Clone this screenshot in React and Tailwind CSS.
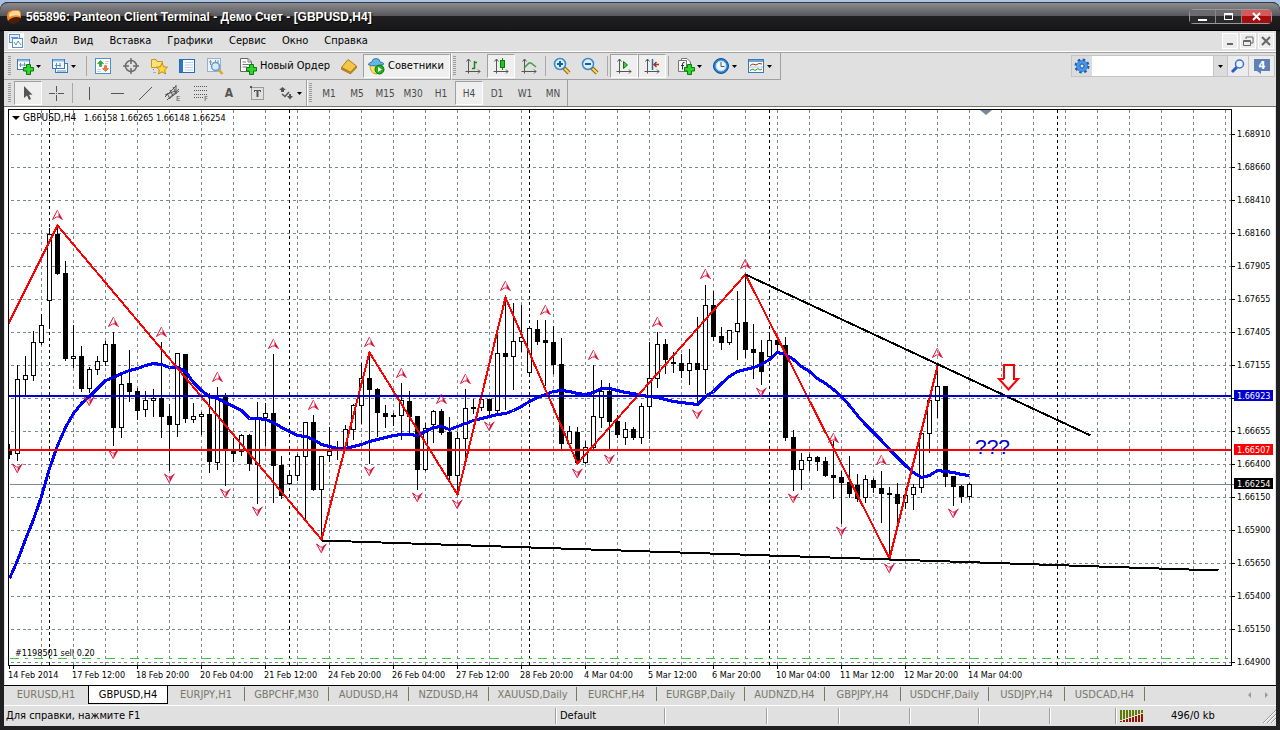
import { useState } from "react";

const menuItems = ["Файл", "Вид", "Вставка", "Графики", "Сервис", "Окно", "Справка"];
const timeframes = ["M1", "M5", "M15", "M30", "H1", "H4", "D1", "W1", "MN"];

const chartTabs = [
  { name: "EURUSD,H1", width: "w-[83px]" },
  { name: "GBPUSD,H4", width: "w-[80px]" },
  { name: "EURJPY,H1", width: "w-[77px]" },
  { name: "GBPCHF,M30", width: "w-[84px]" },
  { name: "AUDUSD,H4", width: "w-[80px]" },
  { name: "NZDUSD,H4", width: "w-[80px]" },
  { name: "XAUUSD,Daily", width: "w-[88px]" },
  { name: "EURCHF,H4", width: "w-[80px]" },
  { name: "EURGBP,Daily", width: "w-[88px]" },
  { name: "AUDNZD,H4", width: "w-[80px]" },
  { name: "GBPJPY,H4", width: "w-[76px]" },
  { name: "USDCHF,Daily", width: "w-[88px]" },
  { name: "USDJPY,H4", width: "w-[76px]" },
  { name: "USDCAD,H4", width: "w-[80px]" },
];

const priceLabels = [
  "1.68910", "1.68660", "1.68410", "1.68160", "1.67905", "1.67655", "1.67405", "1.67155", null,
  "1.66655", "1.66400", "1.66150", "1.65900", "1.65650", "1.65400", "1.65150", "1.64900",
];

const timeLabels = [
  "14 Feb 2014", "17 Feb 12:00", "18 Feb 20:00", "20 Feb 04:00", "21 Feb 12:00", "24 Feb 20:00",
  "26 Feb 04:00", "27 Feb 12:00", "28 Feb 20:00", "4 Mar 04:00", "5 Mar 12:00", "6 Mar 20:00",
  "10 Mar 04:00", "11 Mar 12:00", "12 Mar 20:00", "14 Mar 04:00",
];

// [high, body top, body bottom, low, 1 = rising], one bar every 8 units
const candles = [
  [443, 450, 454, 458, 0], [364, 379, 453, 460, 1], [355, 375, 379, 395, 1], [330, 342, 375, 380, 1],
  [313, 325, 342, 344, 1], [227, 234, 300, 327, 1], [225, 234, 273, 274, 0], [260, 273, 358, 360, 0],
  [324, 356, 358, 367, 1], [345, 356, 388, 391, 0], [366, 369, 388, 392, 1], [355, 361, 369, 374, 1],
  [340, 344, 361, 365, 1], [331, 344, 427, 445, 0], [372, 384, 427, 437, 1], [349, 383, 391, 401, 0],
  [387, 391, 410, 419, 0], [390, 400, 409, 416, 1], [388, 398, 400, 416, 1], [341, 398, 416, 437, 0],
  [403, 416, 424, 470, 0], [352, 353, 424, 436, 1], [353, 354, 418, 422, 0], [402, 416, 419, 422, 1],
  [411, 414, 416, 434, 1], [392, 414, 461, 472, 0], [386, 399, 462, 469, 1], [392, 397, 448, 485, 0],
  [437, 450, 453, 461, 0], [433, 435, 451, 455, 1], [433, 435, 463, 470, 0], [401, 419, 464, 503, 1],
  [402, 413, 417, 445, 1], [353, 413, 465, 502, 0], [455, 465, 495, 498, 0], [470, 475, 483, 484, 1],
  [453, 456, 475, 480, 1], [422, 422, 456, 520, 1], [414, 422, 489, 490, 0], [455, 456, 489, 540, 1],
  [426, 451, 455, 461, 1], [440, 449, 450, 459, 0], [424, 429, 449, 450, 1], [403, 405, 429, 439, 1],
  [362, 378, 405, 423, 1], [352, 378, 389, 463, 0], [387, 389, 412, 436, 0], [404, 413, 416, 427, 0],
  [412, 415, 416, 425, 0], [382, 400, 415, 439, 1], [390, 401, 416, 432, 0], [415, 416, 469, 489, 0],
  [422, 428, 469, 470, 1], [409, 411, 424, 442, 1], [408, 411, 432, 434, 0], [416, 432, 475, 482, 0],
  [431, 438, 475, 493, 1], [388, 408, 438, 456, 1], [398, 407, 408, 413, 0], [398, 399, 407, 410, 1],
  [399, 399, 410, 417, 0], [330, 353, 410, 412, 1], [297, 353, 356, 409, 0], [302, 341, 356, 389, 1],
  [304, 337, 341, 351, 1], [325, 328, 372, 376, 1], [319, 329, 341, 344, 0], [319, 340, 342, 385, 0],
  [325, 342, 364, 373, 0], [337, 364, 443, 448, 0], [425, 431, 443, 447, 1], [426, 432, 462, 464, 0],
  [440, 447, 462, 463, 1], [364, 416, 447, 449, 1], [379, 391, 417, 427, 1], [382, 391, 421, 449, 0],
  [414, 421, 434, 437, 0], [421, 429, 437, 444, 1], [426, 429, 437, 439, 0], [402, 406, 437, 443, 1],
  [341, 378, 406, 438, 1], [331, 344, 378, 387, 1], [338, 344, 359, 373, 0], [351, 362, 363, 372, 0],
  [353, 363, 370, 377, 0], [348, 363, 370, 384, 1], [316, 363, 369, 405, 0], [284, 305, 369, 393, 1],
  [290, 305, 336, 340, 0], [326, 336, 342, 349, 0], [330, 330, 342, 344, 1], [290, 323, 331, 359, 1],
  [274, 322, 349, 357, 0], [323, 349, 352, 378, 0], [339, 352, 371, 384, 0], [331, 340, 356, 357, 1],
  [337, 340, 344, 350, 0], [336, 345, 437, 440, 0], [429, 437, 469, 490, 0], [452, 460, 469, 489, 1],
  [453, 457, 460, 470, 1], [455, 457, 461, 470, 0], [456, 461, 475, 476, 0], [440, 475, 477, 498, 0],
  [470, 477, 482, 523, 0], [455, 482, 493, 497, 0], [473, 485, 498, 501, 0], [474, 479, 497, 502, 1],
  [477, 480, 487, 492, 0], [470, 488, 493, 522, 0], [486, 493, 494, 558, 0], [482, 494, 503, 523, 0],
  [487, 495, 502, 508, 1], [483, 487, 494, 509, 1], [433, 433, 487, 492, 1], [400, 400, 433, 452, 1],
  [364, 386, 400, 417, 1], [385, 386, 476, 486, 0], [475, 476, 486, 505, 0], [484, 486, 496, 502, 0],
  [482, 484, 496, 499, 1],
];

// moving average, one value per bar
const average = [
  578, 560, 539, 519, 496, 468, 445, 427, 413, 403, 396, 388, 380, 377, 373, 370, 368, 365, 363, 364,
  367, 367, 371, 382, 390, 396, 398, 402, 406, 410, 418, 418, 419, 422, 427, 431, 435, 436, 439, 444,
  446, 448, 448, 446, 444, 441, 439, 437, 435, 434, 434, 435, 431, 427, 426, 429, 426, 423, 420, 418,
  416, 414, 413, 410, 406, 401, 397, 394, 391, 390, 391, 393, 394, 392, 388, 388, 390, 392, 393, 395,
  396, 397, 399, 401, 402, 403, 404, 396, 391, 383, 376, 371, 369, 367, 364, 359, 352, 354, 359, 366,
  371, 378, 383, 389, 396, 405, 415, 424, 432, 440, 449, 457, 465, 472, 477, 475, 470, 471, 472, 474,
  475,
];

const upFractals = [
  [57, 215], [113, 322], [161, 332], [217, 377], [273, 344], [313, 405], [369, 342], [401, 373],
  [441, 399], [465, 379], [505, 286], [545, 310], [593, 355], [657, 322], [705, 274], [745, 264],
  [833, 438], [881, 460], [937, 353],
];

const downFractals = [
  [17, 467], [89, 400], [113, 453], [169, 477], [225, 492], [257, 510], [321, 547], [369, 470],
  [417, 496], [457, 503], [489, 425], [577, 472], [609, 458], [697, 413], [761, 391], [793, 497],
  [841, 530], [889, 567], [953, 512],
];

const zigzag = "8,323 57,225 321,539 369,352 457,494 505,297 577,463 745,274 889,558 937,366";

const barX = (index) => 9 + index * 8;

function PriceTag({ y, value, color }) {
  return (
    <g>
      <rect x="1234" y={y - 6} width="39" height="11" fill={color} />
      <text x="1237" y={y + 3} fill="#fff">{value}</text>
    </g>
  );
}

function PriceChart() {
  return (
    <svg viewBox="5 107 1270 578" className="block h-auto w-full bg-white font-['DejaVu_Sans_Condensed','DejaVu_Sans',sans-serif] text-[9px]" role="img" aria-label="GBPUSD,H4">
      <g transform="translate(0.5 0.5)" fill="none" shapeRendering="crispEdges">
        <g stroke="#778899" strokeDasharray="3 3">
          {priceLabels.map((label, i) => (
            <path key={i} d={`M10 ${134 + i * 33}H1231`} />
          ))}
          {Array.from({ length: 38 }, (_, i) => (
            <path key={i} d={`M${41 + i * 32} 109V665`} />
          ))}
        </g>
        <g stroke="#000" strokeDasharray="3 3">
          {[49, 289, 529, 769, 1057].map((x) => (
            <path key={x} d={`M${x} 109V665`} />
          ))}
        </g>
        <path d="M9 484H1235" stroke="#778899" />
        <path d="M9 658H1231" stroke="#32cd32" strokeDasharray="9 6 3 6" />

        {candles.map(([high, top, bottom, low, rising], i) => (
          <g key={i} stroke="#000">
            <path d={`M${barX(i)} ${high}V${low}`} />
            <rect
              x={i === 0 ? 9 : barX(i) - 2}
              y={top}
              width={i === 0 ? 2 : 4}
              height={bottom - top}
              fill={rising ? "#fff" : "#000"}
            />
          </g>
        ))}

        <polyline points={average.map((y, i) => `${barX(i)},${y}`).join(" ")} stroke="#0000ff" strokeWidth="3" strokeLinejoin="round" />
        <polyline points={zigzag} stroke="#ff0000" strokeWidth="2" />
        <path d="M745 274L1090 435M321 540L1218 570" stroke="#000" strokeWidth="2" />
      </g>

      <g shapeRendering="crispEdges">
        <rect x="9" y="395" width="1222" height="2" fill="#0000cd" />
        <rect x="9" y="449" width="1222" height="2" fill="#ff0000" />
      </g>

      {upFractals.map(([x, y]) => (
        <g key={`${x}-${y}`} transform={`translate(${x + 0.5} ${y})`}>
          <path d="M0 -5L-5 4.500L-1 2H1L5 4.500" fill="none" stroke="#dc143c" />
          <path d="M0 -5L5.500 5L1 2V-2Z" fill="#dc143c" />
        </g>
      ))}
      {downFractals.map(([x, y]) => (
        <g key={`${x}-${y}`} transform={`translate(${x + 0.5} ${y + 1})`}>
          <path d="M0 5L-5 -4L-1 -1H1L5 -4" fill="none" stroke="#dc143c" />
          <path d="M0 5L5 -4L1 -1L0 1Z" fill="#dc143c" />
        </g>
      ))}

      <path d="M1004 379V365H1014V379H1018L1008.5 389.500L999 379H1004" fill="#fff" stroke="#ff0000" strokeWidth="2" />
      <text x="975" y="454" fill="#0000cd" className="font-['Liberation_Sans',Arial,sans-serif] text-[21px]">???</text>

      <g transform="translate(0.5 0.5)" fill="none" stroke="#000" shapeRendering="crispEdges">
        <path d="M8 109H1231V665H8Z" />
        {priceLabels.map((label, i) => (
          <path key={i} d={`M1231 ${134 + i * 33}H1234`} />
        ))}
        {timeLabels.map((label, i) => (
          <path key={label} d={`M${9 + i * 64} 665V668`} />
        ))}
      </g>
      <path d="M980 110H992L986 115Z" fill="#778899" />

      <path d="M12 116H20L16 120Z" />
      <text x="23" y="121" className="text-[10px]">GBPUSD,H4</text>
      <text x="84" y="121">1.66158 1.66265 1.66148 1.66254</text>
      <text x="15" y="656">#1198501 sell 0.20</text>

      {priceLabels.map((label, i) => (label ? <text key={label} x="1237" y={137 + i * 33}>{label}</text> : null))}
      {timeLabels.map((label, i) => (
        <text key={label} x={8 + i * 64} y="678">{label}</text>
      ))}
      <PriceTag y={396} value="1.66923" color="#0000cd" />
      <PriceTag y={450} value="1.66507" color="#ff0000" />
      <PriceTag y={484} value="1.66254" color="#000" />
    </svg>
  );
}

function Icon({ children }) {
  return (
    <svg viewBox="0 0 18 18" className="h-[18px] w-[18px] shrink-0 overflow-visible" fill="none" aria-hidden="true">
      {children}
    </svg>
  );
}

function Plus() {
  return <path d="M10.500 7.500H14.500V10.500H17.500V14H14.500V17.500H10.500V14H7.500V10.500H10.500Z" fill="#2fd42f" stroke="#087a08" />;
}

function Caret() {
  return (
    <svg viewBox="0 0 5 3" className="h-[3px] w-[5px] shrink-0" aria-hidden="true">
      <path d="M0 0H5L2.500 3Z" fill="#000" />
    </svg>
  );
}

function Axes() {
  return <path d="M4.500 2V16.500M1.500 14.500H16M2.500 4.500L4.500 2L6.500 4.500M14 12.500L16 14.500L14 16.500" stroke="#555" />;
}

function Magnifier({ minus }) {
  return (
    <Icon>
      <path d="M11 11L16 16" stroke="#8a6a10" strokeWidth="4" />
      <path d="M11.500 11.500L16 16" stroke="#ffd75a" strokeWidth="2" />
      <circle cx="7" cy="7" r="5.500" fill="#d9f0fc" stroke="#3d86c6" strokeWidth="1.500" />
      <path d={minus ? "M4 7H10" : "M4 7H10M7 4V10"} stroke="#1c5f9e" strokeWidth="2" />
    </Icon>
  );
}

function Grip({ tight = false }) {
  return (
    <span
      className={`mr-[3px] h-5 w-[3px] shrink-0 bg-[repeating-linear-gradient(180deg,#9a9a9a_0_1px,#e0e0e0_1px_2px)] ${tight ? "ml-px" : "ml-1"}`}
    />
  );
}

function Divider() {
  return <span className="mx-[2px] h-5 w-px shrink-0 bg-[#a8a8a8]" />;
}

function ToolButton({ label, pressed = false, width = "w-7 justify-center", children }) {
  const state = pressed
    ? "border-t-[#a0a0a0] border-l-[#a0a0a0] border-b-white border-r-white bg-[#efefef]"
    : "border-transparent";

  return (
    <button type="button" aria-label={label} aria-pressed={pressed} className={`flex h-6 shrink-0 items-center border ${width} ${state}`}>
      {children}
    </button>
  );
}

const dropWidth = "w-[35px] gap-[2px] pl-px";

function StandardToolbar() {
  return (
    <div className="flex h-[27px] shrink-0 items-center border-r border-b border-[#a0a0a0]">
      <Grip />
      <ToolButton label="Новый график" width={dropWidth}>
        <Icon>
          <rect x="1.500" y="2.500" width="12" height="10" fill="#fff" stroke="#3b78b8" />
          <path d="M2 3.500H13" stroke="#8dbbe6" strokeWidth="2" />
          <path d="M4.500 6V10M3 8H10M8.500 5.500V9" stroke="#5d8fc0" />
          <Plus />
        </Icon>
        <Caret />
      </ToolButton>
      <ToolButton label="Профили" width={dropWidth}>
        <Icon>
          <rect x="4.500" y="6.500" width="12" height="9" fill="#fff" stroke="#3b78b8" />
          <rect x="1.500" y="2.500" width="12" height="9" fill="#eef6ff" stroke="#3b78b8" />
          <path d="M2 3.500H13" stroke="#8dbbe6" strokeWidth="2" />
          <path d="M4 8.500H10M5.500 6V11M9 6V10M6 14H15" stroke="#5d8fc0" />
        </Icon>
        <Caret />
      </ToolButton>
      <Divider />
      <ToolButton label="Обзор рынка">
        <Icon>
          <rect x="1.500" y="1.500" width="15" height="15" fill="#fff" stroke="#4a90d0" />
          <path d="M6.500 3.500L9.500 6.500H7.500V9.500H5.500V6.500H3.500Z" fill="#22b322" stroke="#128a12" strokeWidth="0.500" />
          <path d="M11.500 14.500L8.500 11.500H10.500V8.500H12.500V11.500H14.500Z" fill="#f07a3c" stroke="#c8400c" strokeWidth="0.500" />
          <path d="M11 4.500H15M11 6.500H14M3 12.500H7M3 14.500H7" stroke="#c5d8ea" />
        </Icon>
      </ToolButton>
      <ToolButton label="Окно данных">
        <Icon>
          <circle cx="9" cy="9" r="5.500" stroke="#6b6b6b" strokeWidth="1.500" />
          <path d="M9 1V7M9 11V17M1 9H7M11 9H17" stroke="#6b6b6b" strokeWidth="1.500" />
        </Icon>
      </ToolButton>
      <ToolButton label="Избранное">
        <Icon>
          <path d="M1.500 2.500H6L7 4.500H12.500V10.500H1.500Z" fill="#ffe27a" stroke="#c8981c" />
          <path d="M3.500 12V14M3.500 15.500H6" stroke="#777" strokeDasharray="1 1" />
          <path d="M12 6L13.700 9.800L17.500 10.200L14.700 12.800L15.500 17L12 14.800L8.500 17L9.300 12.800L6.500 10.200L10.300 9.800Z" fill="#ffd83d" stroke="#c58a12" />
        </Icon>
      </ToolButton>
      <ToolButton label="Навигатор">
        <Icon>
          <rect x="1.500" y="2.500" width="15" height="13" fill="#fff" stroke="#1f6fb8" />
          <rect x="2" y="3" width="3" height="12" fill="#2a78c4" />
          <path d="M7 5.500H15M7 8H15M7 10.500H15M7 13H15" stroke="#b6cde4" />
        </Icon>
      </ToolButton>
      <ToolButton label="Тестер стратегий">
        <Icon>
          <rect x="1.500" y="1.500" width="13" height="13" fill="#eef3f8" stroke="#9ab0c6" />
          <path d="M4.500 3V8M3 5H6M9.500 3V7M12 3V6" stroke="#8293a5" />
          <path d="M12.500 12.500L16.500 17" stroke="#dba726" strokeWidth="2.500" />
          <circle cx="9.500" cy="9.500" r="4" fill="#d5ebfb" stroke="#5c9bd2" strokeWidth="1.500" />
        </Icon>
      </ToolButton>
      <span className="w-[5px]" />
      <ToolButton label="Новый Ордер" width="w-[101px] gap-[3px] pl-1">
        <Icon>
          <path d="M1.500 1.500H9L12.500 5V14.500H1.500Z" fill="#fff" stroke="#666" />
          <path d="M9 1.500V5H12.500M3.500 5H7M3.500 7.500H10M3.500 10H8" stroke="#777" />
          <Plus />
        </Icon>
        <span>Новый Ордер</span>
      </ToolButton>
      <ToolButton label="Редактор MetaEditor">
        <Icon>
          <path d="M1.500 10.500L8 2.500L16.500 9L10.500 15.500Z" fill="#f3c64a" stroke="#b07a14" />
          <path d="M1.500 10.500V12.500L10.500 17L16.500 11V9L10.500 15.200Z" fill="#c98d1e" stroke="#8d5f10" strokeWidth="0.500" />
        </Icon>
      </ToolButton>
      <ToolButton label="Советники" pressed width="w-[87px] gap-[3px] pl-[3px]">
        <Icon>
          <path d="M3 8Q3 16 9 17Q15 16 15 8Z" fill="#ffe06a" stroke="#c79a20" />
          <path d="M1 7.500Q3 5 5 5Q5 1.500 9 1.500Q13 1.500 13 5Q16 5 17 7Q13 9 9 9Q4 9 1 7.500Z" fill="#67b5e4" stroke="#2f7fb5" />
          <circle cx="12.500" cy="12.500" r="4.500" fill="#1fae1f" stroke="#0b7a0b" />
          <path d="M11 10V15L15 12.500Z" fill="#fff" />
        </Icon>
        <span>Советники</span>
      </ToolButton>
    </div>
  );
}

function ChartsToolbar() {
  return (
    <div className="flex h-[27px] shrink-0 items-center border-r border-b border-r-[#a0a0a0] border-b-[#a0a0a0] border-l border-l-white">
      <Grip tight />
      <ToolButton label="Бары">
        <Icon>
          <Axes />
          <path d="M10.500 4V12M8 11.500H10.500M10.500 5.500H13" stroke="#138a13" strokeWidth="1.500" />
        </Icon>
      </ToolButton>
      <ToolButton label="Японские свечи" pressed>
        <Icon>
          <Axes />
          <path d="M10.500 1V13" stroke="#138a13" />
          <rect x="8.500" y="3.500" width="4" height="7" fill="#27c427" stroke="#0b7a0b" />
        </Icon>
      </ToolButton>
      <ToolButton label="Линия">
        <Icon>
          <Axes />
          <path d="M4 11L9 6H11L16 10" stroke="#3d9a4a" strokeWidth="1.500" />
        </Icon>
      </ToolButton>
      <Divider />
      <ToolButton label="Увеличить"><Magnifier /></ToolButton>
      <ToolButton label="Уменьшить"><Magnifier minus /></ToolButton>
      <span className="w-px" />
      <Divider />
      <ToolButton label="Автопрокрутка" pressed>
        <Icon>
          <Axes />
          <path d="M8.500 4.500L12.500 8L8.500 11.500Z" fill="#46c846" stroke="#0b7a0b" />
        </Icon>
      </ToolButton>
      <ToolButton label="Сдвиг графика" pressed>
        <Icon>
          <Axes />
          <path d="M9.500 2V13" stroke="#1c6fb5" strokeWidth="1.500" />
          <path d="M16 7.500H11M13.500 5L11 7.500L13.500 10" stroke="#b0330e" strokeWidth="1.500" />
        </Icon>
      </ToolButton>
      <Divider />
      <span className="w-1" />
      <ToolButton label="Индикаторы" width={dropWidth}>
        <Icon>
          <path d="M4.500 3.500V1.500H10L13.500 5V14.500H4.500" fill="#fff" stroke="#777" />
          <path d="M1.500 3.500H9.500V14.500H1.500Z" fill="#f5f5f5" stroke="#777" />
          <path d="M7.500 5.500Q5.500 5 5.500 7V12.500M4 8.500H7" stroke="#333" />
          <Plus />
        </Icon>
        <Caret />
      </ToolButton>
      <ToolButton label="Периодичность" width={dropWidth}>
        <Icon>
          <circle cx="9" cy="9" r="7.500" fill="#2583d8" stroke="#0f4f92" />
          <circle cx="9" cy="9" r="5" fill="#eef6fd" stroke="#bcdcf5" />
          <path d="M9 5V9.500H12.500" stroke="#555" />
        </Icon>
        <Caret />
      </ToolButton>
      <ToolButton label="Шаблоны" width={dropWidth}>
        <Icon>
          <rect x="1.500" y="2.500" width="15" height="13" fill="#fff" stroke="#3b78b8" />
          <path d="M2 4H16" stroke="#6aa5dc" strokeWidth="2" />
          <path d="M3 8.500L6 7L9 8L12 6.500L15 7" stroke="#a8321c" />
          <path d="M2 10H16" stroke="#a9c6e2" />
          <path d="M3 13.500L6 12L8 13.500L11 11.500L13 13L15 12" stroke="#2c9a38" />
        </Icon>
        <Caret />
      </ToolButton>
    </div>
  );
}

function LineToolbar() {
  return (
    <div className="flex h-[26px] shrink-0 items-center border-r border-[#a0a0a0]">
      <Grip />
      <ToolButton label="Курсор" pressed>
        <Icon><path d="M5 2V14L8 11.500L10 16L12 15L10 10.800H13.500Z" fill="#555" /></Icon>
      </ToolButton>
      <ToolButton label="Перекрестие">
        <Icon><path d="M9.500 2V8M9.500 11V17M2 9.500H8M11 9.500H17M9 9.500H10" stroke="#555" /></Icon>
      </ToolButton>
      <Divider />
      <ToolButton label="Вертикальная линия"><Icon><path d="M9.500 3V16" stroke="#555" /></Icon></ToolButton>
      <ToolButton label="Горизонтальная линия"><Icon><path d="M3 9.500H16" stroke="#555" /></Icon></ToolButton>
      <ToolButton label="Трендовая линия"><Icon><path d="M3 16L16 3" stroke="#555" /></Icon></ToolButton>
      <ToolButton label="Равноудаленный канал">
        <Icon>
          <path d="M1 13L12 2M3 16L15 5M3 9L6 15M6 6L9 12M9 3L12 9M1 11L11 7M6 14L15 7M12 1V10" stroke="#555" />
          <text x="12" y="17" fill="#555" className="font-['DejaVu_Sans'] text-[7px]">E</text>
        </Icon>
      </ToolButton>
      <ToolButton label="Линии Фибоначчи">
        <Icon>
          <path d="M2 2.500H15M2 6.500H15M2 10.500H15M2 13.500H11" stroke="#555" strokeDasharray="1 1" />
          <text x="12" y="17" fill="#555" className="font-['DejaVu_Sans'] text-[7px]">F</text>
        </Icon>
      </ToolButton>
      <ToolButton label="Текст"><span className="text-[12px] font-bold text-[#555]">A</span></ToolButton>
      <ToolButton label="Текстовая метка">
        <Icon>
          <rect x="3.500" y="3.500" width="12" height="12" stroke="#555" strokeDasharray="1 1" />
          <path d="M2 2H4V4H2ZM6 6H13V8H12V7H10.500V13H8.500V7H7V8H6Z" fill="#555" />
        </Icon>
      </ToolButton>
      <ToolButton label="Стрелки" width="w-[35px] gap-[2px] pl-[5px]">
        <Icon>
          <path d="M2 6L5.500 3L9 6H7V8H4V6ZM10 12H12V10H14V12H16L13 15.500Z" fill="#555" />
          <path d="M5 10L8 12.500L12 8" stroke="#555" strokeWidth="1.500" />
        </Icon>
        <Caret />
      </ToolButton>
    </div>
  );
}

function PeriodToolbar() {
  const [period, setPeriod] = useState("H4");

  return (
    <div className="flex h-[26px] shrink-0 items-center border-r border-l border-r-[#a0a0a0] border-l-white text-[10px] text-[#4a4a4a]">
      <Grip tight />
      {timeframes.map((name) => (
        <button
          key={name}
          type="button"
          onClick={() => setPeriod(name)}
          className={`h-6 w-7 border ${
            name === period
              ? "border-t-[#a0a0a0] border-l-[#a0a0a0] border-b-white border-r-white bg-[#efefef]"
              : "border-transparent"
          }`}
        >
          {name}
        </button>
      ))}
    </div>
  );
}

function SearchBox() {
  return (
    <div className="mt-[2px] mr-px ml-auto flex h-[22px] self-start border border-[#c4c4c4] bg-[#ececec]">
      <button type="button" aria-label="Настройки" className="flex w-5 items-center justify-center bg-[#dcdcdc]">
        <svg viewBox="0 0 16 16" className="h-4 w-4" aria-hidden="true">
          <circle cx="8" cy="8" r="6" fill="#3d86dc" stroke="#1c5cb0" strokeWidth="3" strokeDasharray="2.400 2.300" />
          <circle cx="8" cy="8" r="5.500" fill="#4a92e6" />
          <circle cx="8" cy="8" r="2" fill="#dcebfa" stroke="#1c5cb0" />
        </svg>
      </button>
      <input type="text" aria-label="Поиск" className="w-[121px] bg-white px-1 outline-none" />
      <button type="button" aria-label="История поиска" className="flex w-[15px] items-center justify-center border-x border-[#c4c4c4] bg-[#dcdcdc]">
        <Caret />
      </button>
      <button type="button" aria-label="Найти" className="flex w-5 items-center justify-center">
        <svg viewBox="0 0 16 16" className="h-4 w-4" fill="none" aria-hidden="true">
          <path d="M2 14L7 9" stroke="#2a5fc0" strokeWidth="3" />
          <circle cx="9.500" cy="6" r="4" fill="#eaf3fd" stroke="#3a72d0" strokeWidth="1.500" />
        </svg>
      </button>
      <button type="button" aria-label="Сообщения" className="flex w-[26px] items-center justify-center border-l border-[#c4c4c4]">
        <svg viewBox="0 0 16 16" className="h-4 w-4" aria-hidden="true">
          <path d="M0 1H16V13H7V16L3 13H0Z" fill="#5f80b5" />
          <text x="8" y="11" textAnchor="middle" fill="#fff" className="font-['DejaVu_Sans'] text-[10px] font-bold">4</text>
        </svg>
      </button>
    </div>
  );
}

function TitleBar() {
  return (
    <header className="flex h-[29px] items-center rounded-t-lg border-t border-b border-t-[#3a3a3c] border-b-black bg-[linear-gradient(180deg,#8c8c90_0%,#56575a_48%,#1f1f21_50%,#18181a_100%)] pr-2 pl-[6px]">
      <svg viewBox="0 0 16 16" className="h-4 w-4" aria-hidden="true">
        <path d="M1 7Q1 1 7 1H12Q15 1 15 5V10Q12 15 6 15Q1 14 1 7Z" fill="#4a1f08" />
        <path d="M1 7Q1 1 7 1H12Q15 1 15 5V9Q10 7 6 9Q3 10 2 12Q1 10 1 7Z" fill="#f08a28" />
        <path d="M3 6Q4 2 8 2H12Q14 2 14 4V7Q9 5 3 8Z" fill="#ffd9a0" />
      </svg>
      <h1 className="ml-1 font-['Liberation_Sans',Arial,sans-serif] text-[12px] font-bold text-white [text-shadow:1px_1px_1px_#000]">
        565896: Panteon Client Terminal - Демо Счет - [GBPUSD,H4]
      </h1>
      <div className="ml-auto flex h-[15px] rounded-sm border border-[#999] bg-[#2c2c2e]">
        <button type="button" aria-label="Свернуть" className="flex w-[26px] items-end justify-center border-r border-[#888] bg-[linear-gradient(180deg,#6b6b6e_45%,#2a2a2c_50%)] pb-[2px]">
          <span className="h-[2px] w-[9px] bg-white" />
        </button>
        <button type="button" aria-label="Развернуть" className="flex w-[26px] items-center justify-center border-r border-[#888] bg-[linear-gradient(180deg,#6b6b6e_45%,#2a2a2c_50%)]">
          <span className="h-[7px] w-[9px] border border-t-2 border-white" />
        </button>
        <button type="button" aria-label="Закрыть" className="flex w-[29px] items-center justify-center bg-[linear-gradient(180deg,#d65a5a_45%,#a80d0d_50%)]">
          <svg viewBox="0 0 9 9" className="h-[9px] w-[9px]" aria-hidden="true">
            <path d="M1 1L8 8M8 1L1 8" stroke="#fff" strokeWidth="2" />
          </svg>
        </button>
      </div>
    </header>
  );
}

function MenuBar() {
  return (
    <nav className="flex h-[21px] items-center border-b border-white pr-[2px] pl-1 text-[11px]">
      <svg viewBox="0 0 16 16" className="h-4 w-4" fill="none" aria-hidden="true">
        <rect width="16" height="16" fill="#fff" />
        <rect x="1.500" y="1.500" width="10" height="8" fill="#e4effc" stroke="#5a93d4" />
        <rect x="4.500" y="5.500" width="10" height="9" fill="#fff" stroke="#5a93d4" />
        <path d="M3 4.500H10M6 9L8 12L10 8L13 12" stroke="#5a93d4" />
      </svg>
      <div className="ml-[6px] flex gap-4 pt-px">
        {menuItems.map((item) => (
          <a key={item} href="#" className="text-black">{item}</a>
        ))}
      </div>
      <div className="ml-auto flex gap-[2px]">
        <button type="button" aria-label="Свернуть график" className="h-4 w-4 border border-white bg-[#ededed]">
          <svg viewBox="0 0 14 14" aria-hidden="true"><path d="M4 10H10" stroke="#666" strokeWidth="2" /></svg>
        </button>
        <button type="button" aria-label="Восстановить график" className="h-4 w-4 border border-white bg-[#ededed]">
          <svg viewBox="0 0 14 14" fill="none" aria-hidden="true">
            <path d="M5 5V3H12V9H10M2.500 6.500H9.500V11.500H2.500ZM2.500 7.500H9" stroke="#666" />
          </svg>
        </button>
        <button type="button" aria-label="Закрыть график" className="h-4 w-4 border border-white bg-[#ededed]">
          <svg viewBox="0 0 14 14" aria-hidden="true"><path d="M3 3L11 11M11 3L3 11" stroke="#666" strokeWidth="2" /></svg>
        </button>
      </div>
    </nav>
  );
}

function ChartTabs() {
  const [active, setActive] = useState("GBPUSD,H4");

  return (
    <div className="flex h-5 items-start border-t border-black pl-px text-[11px]">
      {chartTabs.map((tab, i) => {
        const isActive = tab.name === active;
        const edge = i === 0 ? "border-r border-transparent" : "border-r border-[#77776a]";

        return (
          <button
            key={tab.name}
            type="button"
            onClick={() => setActive(tab.name)}
            className={`shrink-0 ${tab.width} ${
              isActive ? "h-[18px] border border-t-0 border-black bg-white text-black" : `h-[14px] mt-px ${edge} text-[#77776a]`
            }`}
          >
            <span className="block leading-4">{tab.name}</span>
          </button>
        );
      })}
      <div className="mt-1 mr-1 ml-auto flex gap-1 text-[#909090]">
        <button type="button" aria-label="Назад" className="w-3">
          <svg viewBox="0 0 12 10" aria-hidden="true"><path d="M7 2V8L4 5Z" fill="#999" /></svg>
        </button>
        <button type="button" aria-label="Вперед" className="w-3">
          <svg viewBox="0 0 12 10" aria-hidden="true"><path d="M5 2V8L8 5Z" fill="#999" /></svg>
        </button>
      </div>
    </div>
  );
}

function StatusCell({ width, children }) {
  return <div className={`flex h-4 shrink-0 items-center border-l border-[#a0a0a0] shadow-[inset_1px_0_0_#fff] ${width}`}>{children}</div>;
}

function StatusBar() {
  return (
    <footer className="flex h-[21px] items-center border-t border-white text-[11px]">
      <p className="min-w-0 flex-1 pl-[2px] whitespace-nowrap">Для справки, нажмите F1</p>
      <StatusCell width="w-[109px] pl-1">Default</StatusCell>
      <StatusCell width="w-[102px]" />
      <StatusCell width="w-[72px]" />
      <StatusCell width="w-[71px]" />
      <StatusCell width="w-[69px]" />
      <StatusCell width="w-[71px]" />
      <StatusCell width="w-[66px]" />
      <StatusCell width="w-[161px] pl-1">
        <svg viewBox="0 0 24 12" className="h-3 w-6" shapeRendering="crispEdges" aria-hidden="true">
          {Array.from({ length: 8 }, (_, i) => (
            <g key={i}>
              <rect x={i * 3} y="0" width="2" height={10 - i} fill="#5c7a00" />
              <rect x={i * 3} y={11 - i} width="2" height={i + 1} fill="#9a1400" />
            </g>
          ))}
        </svg>
        <span className="ml-[27px]">496/0 kb</span>
        <svg viewBox="0 0 14 14" className="ml-auto h-[14px] w-[14px]" aria-hidden="true">
          <path d="M1 14L14 1M5 14L14 5M9 14L14 9" stroke="#999" />
          <path d="M2 14L14 2M6 14L14 6M10 14L14 10" stroke="#fff" />
        </svg>
      </StatusCell>
    </footer>
  );
}

export default function App() {
  return (
    <div className="bg-[#a9c3e8] pt-[2px] font-['DejaVu_Sans_Condensed','DejaVu_Sans',sans-serif] text-[11px] text-black">
      <div className="rounded-t-lg bg-[#202022] px-1 pb-1">
        <div className="-mx-1">
          <TitleBar />
        </div>
        <div className="bg-[#e0e0e0]">
          <MenuBar />
          <div className="flex h-[28px] items-start border-t border-[#a0a0a0]">
            <StandardToolbar />
            <ChartsToolbar />
            <SearchBox />
          </div>
          <div className="flex h-[27px] border-b border-[#6f7568]">
            <LineToolbar />
            <PeriodToolbar />
          </div>
          <main className="px-px">
            <PriceChart />
          </main>
          <ChartTabs />
          <StatusBar />
        </div>
      </div>
    </div>
  );
}
